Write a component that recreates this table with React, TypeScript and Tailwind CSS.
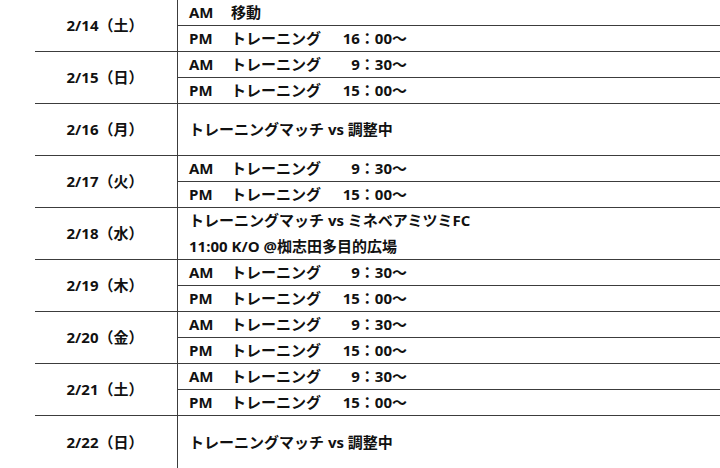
import React from 'react';

type Slot = { ap: string; what: string; time?: string };
type Day = { date: string; slots?: Slot[]; lines?: string[] };

const days: Day[] = [
  { date: '2/14（土）', slots: [{ ap: 'AM', what: '移動' }, { ap: 'PM', what: 'トレーニング', time: '16：00～' }] },
  { date: '2/15（日）', slots: [{ ap: 'AM', what: 'トレーニング', time: '9：30～' }, { ap: 'PM', what: 'トレーニング', time: '15：00～' }] },
  { date: '2/16（月）', lines: ['トレーニングマッチ vs 調整中'] },
  { date: '2/17（火）', slots: [{ ap: 'AM', what: 'トレーニング', time: '9：30～' }, { ap: 'PM', what: 'トレーニング', time: '15：00～' }] },
  { date: '2/18（水）', lines: ['トレーニングマッチ vs ミネベアミツミFC', '11:00 K/O @椥志田多目的広場'] },
  { date: '2/19（木）', slots: [{ ap: 'AM', what: 'トレーニング', time: '9：30～' }, { ap: 'PM', what: 'トレーニング', time: '15：00～' }] },
  { date: '2/20（金）', slots: [{ ap: 'AM', what: 'トレーニング', time: '9：30～' }, { ap: 'PM', what: 'トレーニング', time: '15：00～' }] },
  { date: '2/21（土）', slots: [{ ap: 'AM', what: 'トレーニング', time: '9：30～' }, { ap: 'PM', what: 'トレーニング', time: '15：00～' }] },
  { date: '2/22（日）', lines: ['トレーニングマッチ vs 調整中'] },
];

const App: React.FC = () => {
  return (
    <div
      className="w-[720px] h-[468px] overflow-hidden bg-white pl-[35px] text-[15px] font-bold text-[#111] leading-none"
      style={{ fontFamily: '"Open Sans", "Noto Sans CJK JP", sans-serif' }}
    >
      {days.map((d, i) => {
        const last = i === days.length - 1;
        return (
          <div
            key={d.date}
            className={`flex ${last ? 'h-[53px]' : 'h-[52px] border-b border-[#3c3c3c]'}`}
          >
            {/* date cell */}
            <div className="w-[143px] shrink-0 border-r border-[#3c3c3c] flex items-center justify-center pr-[2px]">
              {d.date}
            </div>

            {/* schedule cell */}
            {d.slots ? (
              <div className="flex-1 flex flex-col">
                {d.slots.map((s, j) => (
                  <div
                    key={j}
                    className={`flex items-center pl-[11px] ${j === 0 ? 'h-[26px] border-b border-[#3c3c3c]' : 'flex-1'}`}
                  >
                    <span className="inline-block w-[42px]">{s.ap}</span>
                    <span className="inline-block w-[109px]">{s.what}</span>
                    {s.time && <span className="inline-block w-[67px] text-right">{s.time}</span>}
                  </div>
                ))}
              </div>
            ) : (
              <div className={`flex-1 flex flex-col justify-center pl-[11px] ${d.lines && d.lines.length > 1 ? 'gap-[11px]' : ''}`}>
                {d.lines?.map((l, j) => (
                  <div key={j}>{l}</div>
                ))}
              </div>
            )}
          </div>
        );
      })}
    </div>
  );
};

export default App;
